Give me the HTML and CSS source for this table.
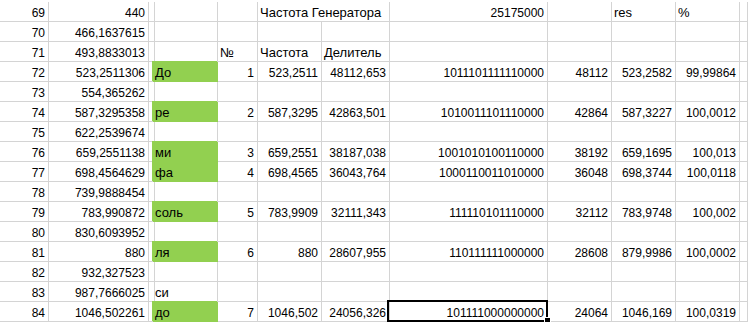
FILE: index.html
```html
<!DOCTYPE html>
<html>
<head>
<meta charset="utf-8">
<link rel="stylesheet" href="styles.css">
</head>
<body>
<div class="sheet">
  <div class="c r">69</div><div class="c r">440</div><div class="c"></div><div class="c"></div><div class="c"></div><div class="c l t span2">Частота Генератора</div><div class="c r">25175000</div><div class="c"></div><div class="c l t">res</div><div class="c l t">%</div><div class="c"></div>
  <div class="c r">70</div><div class="c r">466,1637615</div><div class="c"></div><div class="c"></div><div class="c"></div><div class="c"></div><div class="c"></div><div class="c"></div><div class="c"></div><div class="c"></div><div class="c"></div><div class="c"></div>
  <div class="c r">71</div><div class="c r">493,8833013</div><div class="c"></div><div class="c"></div><div class="c l t">№</div><div class="c l t">Частота</div><div class="c l t">Делитель</div><div class="c"></div><div class="c"></div><div class="c"></div><div class="c"></div><div class="c"></div>
  <div class="c r">72</div><div class="c r">523,2511306</div><div class="c"></div><div class="c l t g">До</div><div class="c r">1</div><div class="c r">523,2511</div><div class="c r">48112,653</div><div class="c r">1011101111110000</div><div class="c r">48112</div><div class="c r">523,2582</div><div class="c r">99,99864</div><div class="c"></div>
  <div class="c r">73</div><div class="c r">554,365262</div><div class="c"></div><div class="c"></div><div class="c"></div><div class="c"></div><div class="c"></div><div class="c"></div><div class="c"></div><div class="c"></div><div class="c"></div><div class="c"></div>
  <div class="c r">74</div><div class="c r">587,3295358</div><div class="c"></div><div class="c l t g">ре</div><div class="c r">2</div><div class="c r">587,3295</div><div class="c r">42863,501</div><div class="c r">1010011101110000</div><div class="c r">42864</div><div class="c r">587,3227</div><div class="c r">100,0012</div><div class="c"></div>
  <div class="c r">75</div><div class="c r">622,2539674</div><div class="c"></div><div class="c"></div><div class="c"></div><div class="c"></div><div class="c"></div><div class="c"></div><div class="c"></div><div class="c"></div><div class="c"></div><div class="c"></div>
  <div class="c r">76</div><div class="c r">659,2551138</div><div class="c"></div><div class="c l t g">ми</div><div class="c r">3</div><div class="c r">659,2551</div><div class="c r">38187,038</div><div class="c r">1001010100110000</div><div class="c r">38192</div><div class="c r">659,1695</div><div class="c r">100,013</div><div class="c"></div>
  <div class="c r">77</div><div class="c r">698,4564629</div><div class="c"></div><div class="c l t g">фа</div><div class="c r">4</div><div class="c r">698,4565</div><div class="c r">36043,764</div><div class="c r">1000110011010000</div><div class="c r">36048</div><div class="c r">698,3744</div><div class="c r">100,0118</div><div class="c"></div>
  <div class="c r">78</div><div class="c r">739,9888454</div><div class="c"></div><div class="c"></div><div class="c"></div><div class="c"></div><div class="c"></div><div class="c"></div><div class="c"></div><div class="c"></div><div class="c"></div><div class="c"></div>
  <div class="c r">79</div><div class="c r">783,990872</div><div class="c"></div><div class="c l t g">соль</div><div class="c r">5</div><div class="c r">783,9909</div><div class="c r">32111,343</div><div class="c r">111110101110000</div><div class="c r">32112</div><div class="c r">783,9748</div><div class="c r">100,002</div><div class="c"></div>
  <div class="c r">80</div><div class="c r">830,6093952</div><div class="c"></div><div class="c"></div><div class="c"></div><div class="c"></div><div class="c"></div><div class="c"></div><div class="c"></div><div class="c"></div><div class="c"></div><div class="c"></div>
  <div class="c r">81</div><div class="c r">880</div><div class="c"></div><div class="c l t g">ля</div><div class="c r">6</div><div class="c r">880</div><div class="c r">28607,955</div><div class="c r">110111111000000</div><div class="c r">28608</div><div class="c r">879,9986</div><div class="c r">100,0002</div><div class="c"></div>
  <div class="c r">82</div><div class="c r">932,327523</div><div class="c"></div><div class="c"></div><div class="c"></div><div class="c"></div><div class="c"></div><div class="c"></div><div class="c"></div><div class="c"></div><div class="c"></div><div class="c"></div>
  <div class="c r">83</div><div class="c r">987,7666025</div><div class="c"></div><div class="c l t">си</div><div class="c"></div><div class="c"></div><div class="c"></div><div class="c"></div><div class="c"></div><div class="c"></div><div class="c"></div><div class="c"></div>
  <div class="c r">84</div><div class="c r">1046,502261</div><div class="c"></div><div class="c l t g">до</div><div class="c r">7</div><div class="c r">1046,502</div><div class="c r">24056,326</div><div class="c r sel">101111000000000<span class="handle"></span></div><div class="c r">24064</div><div class="c r">1046,169</div><div class="c r">100,0319</div><div class="c"></div>
</div>
</body>
</html>
```
FILE: styles.css
```css
html, body {
  margin: 0;
  padding: 0;
  background: #fff;
}
body {
  font-family: "Liberation Sans", Arial, sans-serif;
  font-size: 12px;
  color: #000;
  overflow: hidden;
}
.sheet {
  margin-top: 2px;
  display: grid;
  grid-template-columns: 49px 100px 4px 65px 40px 64px 68px 158px 64px 64px 64px 1fr;
  grid-auto-rows: 20px;
}
.c {
  position: relative;
  border-right: 1px solid #d4d4d4;
  border-bottom: 1px solid #d4d4d4;
  padding: 3px 3px 0 2px;
  line-height: 16px;
  white-space: nowrap;
  overflow: visible;
}
.r { text-align: right; }
.l { text-align: left; }
.t { font-size: 13px; padding-left: 2px; }
.span2 { grid-column: span 2; }
.g {
  background: #92d050;
  border-right-color: #92d050;
  border-bottom-color: #92d050;
  box-shadow: -1px -1px 0 #92d050;
}
.sel::after {
  content: "";
  position: absolute;
  left: -3px;
  top: -2px;
  right: -1px;
  bottom: -1px;
  border: 2px solid #000;
}
.handle {
  position: absolute;
  right: -4px;
  bottom: -3px;
  width: 5px;
  height: 5px;
  background: #000;
  border: 1px solid #fff;
  z-index: 2;
}
```
